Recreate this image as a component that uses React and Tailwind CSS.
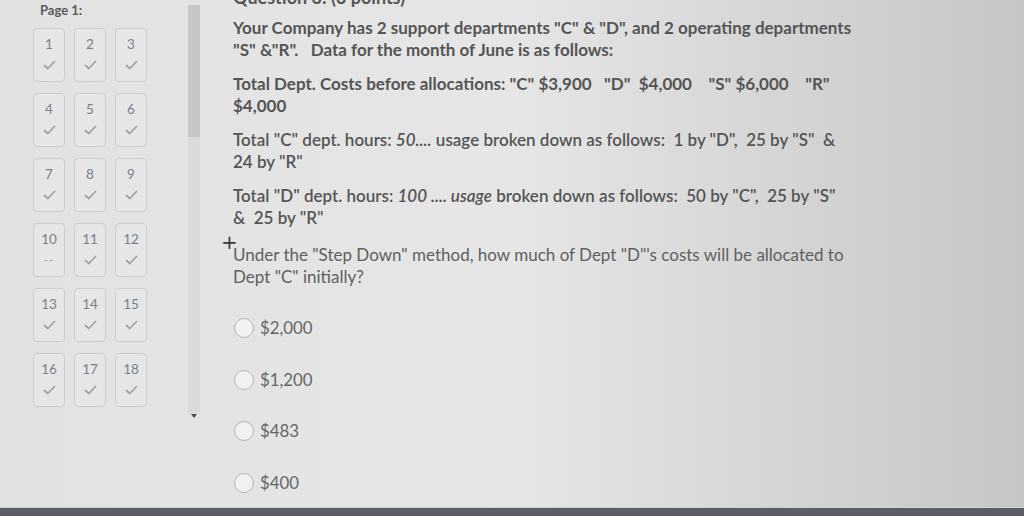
import React from "react";

const Check = () => (
  <svg width="13" height="10" viewBox="0 0 13 10" fill="none">
    <path d="M1.5 5.5 L4.8 8.5 L11.5 1.5" stroke="#a0a0a0" strokeWidth="1.7" strokeLinecap="round" strokeLinejoin="round" />
  </svg>
);

function Tile({ n, dash }) {
  return (
    <div className="w-[32px] h-[54px] rounded-[4px] border border-[#cdcdcd] bg-[#e6e6e6] flex flex-col items-center">
      <div className="mt-[6px] h-[18px] leading-[18px] text-[13.5px] text-[#7b808b]">{n}</div>
      <div className="mt-[5px] h-[14px] flex items-center justify-center">
        {dash ? <span className="text-[11px] leading-[14px] text-[#9a9a9a] tracking-[1px]">--</span> : <Check />}
      </div>
    </div>
  );
}

function Option({ label }) {
  return (
    <div className="flex items-center h-[22px]">
      <div className="w-[20px] h-[20px] rounded-full border-[1.5px] border-[#b3b3b3] bg-[#f1f1f1]" />
      <span className="ml-[6px] text-[16.8px] text-[#666666]">{label}</span>
    </div>
  );
}

export default function App() {
  const tiles = Array.from({ length: 18 }, (_, i) => i + 1);
  return (
    <div className="w-[1024px] h-[516px] overflow-hidden relative flex flex-col font-[Lato,sans-serif] bg-gradient-to-r from-[#e2e2e2] via-[#e6e6e6] to-[#c6c6c6]">
      <div className="flex-1 flex">
        {/* Left panel */}
        <div className="w-[188px] pl-[33px] pt-[2px]">
          <div className="pl-[7px] text-[13px] font-bold leading-[16px] text-[#5a5a5a]">Page 1:</div>
          <div className="mt-[10px] grid grid-cols-[32px_32px_32px] gap-x-[9px] gap-y-[11px]">
            {tiles.map((n) => (
              <Tile key={n} n={n} dash={n === 10} />
            ))}
          </div>
        </div>
        {/* Scrollbar */}
        <div className="w-[12px] flex flex-col items-center">
          <div className="w-[12px] h-[408px] mt-[5px] bg-[#dadada] flex flex-col">
            <div className="h-[132px] bg-[#c6c6c6]" />
          </div>
          <div className="mt-[1px] w-0 h-0 border-l-[3px] border-r-[3px] border-t-[4px] border-l-transparent border-r-transparent border-t-[#4a4a4a]" />
        </div>
        {/* Content */}
        <div className="flex-1 pl-[33px] relative">
          <div className="-mt-[14px] h-[22px] leading-[22px] text-[18px] font-bold text-[#555555] whitespace-nowrap">Question 3: (3 points)</div>
          <div className="mt-[9px] text-[17px] leading-[21.5px] text-[#555555] whitespace-nowrap">
            <p className="font-bold mb-[13px]">
              Your Company has 2 support departments "C" &amp; "D", and 2 operating departments
              <br />
              "S" &amp;"R".&nbsp;&nbsp; Data for the month of June is as follows:
            </p>
            <p className="font-bold mb-[13px]">
              Total Dept. Costs before allocations: "C" $3,900&nbsp;&nbsp; "D"&nbsp; $4,000&nbsp;&nbsp;&nbsp; "S" $6,000&nbsp;&nbsp;&nbsp; "R"
              <br />
              $4,000
            </p>
            <p className="font-semibold mb-[13px]">
              Total "C" dept. hours: <i>50....</i> usage broken down as follows:&nbsp; 1 by "D",&nbsp; 25 by "S"&nbsp; &amp;
              <br />
              24 by "R"
            </p>
            <p className="font-semibold mb-[16px]">
              Total "D" dept. hours: <i>100 .... usage</i> broken down as follows:&nbsp; 50 by "C",&nbsp; 25 by "S"
              <br />
              &amp;&nbsp; 25 by "R"
            </p>
            <p className="text-[#606060]">
              Under the "Step Down" method, how much of Dept "D"'s costs will be allocated to
              <br />
              Dept "C" initially?
            </p>
          </div>
          <div className="mt-[30px] ml-[1px] flex flex-col gap-[29.5px]">
            <Option label="$2,000" />
            <Option label="$1,200" />
            <Option label="$483" />
            <Option label="$400" />
          </div>
          <div className="absolute left-[21px] top-[232px] text-[20px] leading-[20px] text-[#3a3a3a] font-[DejaVu_Sans,sans-serif]">+</div>
        </div>
      </div>
      <div className="h-[9px] bg-[#5b5e66] border-t border-[#d2d2d2]" />
    </div>
  );
}
